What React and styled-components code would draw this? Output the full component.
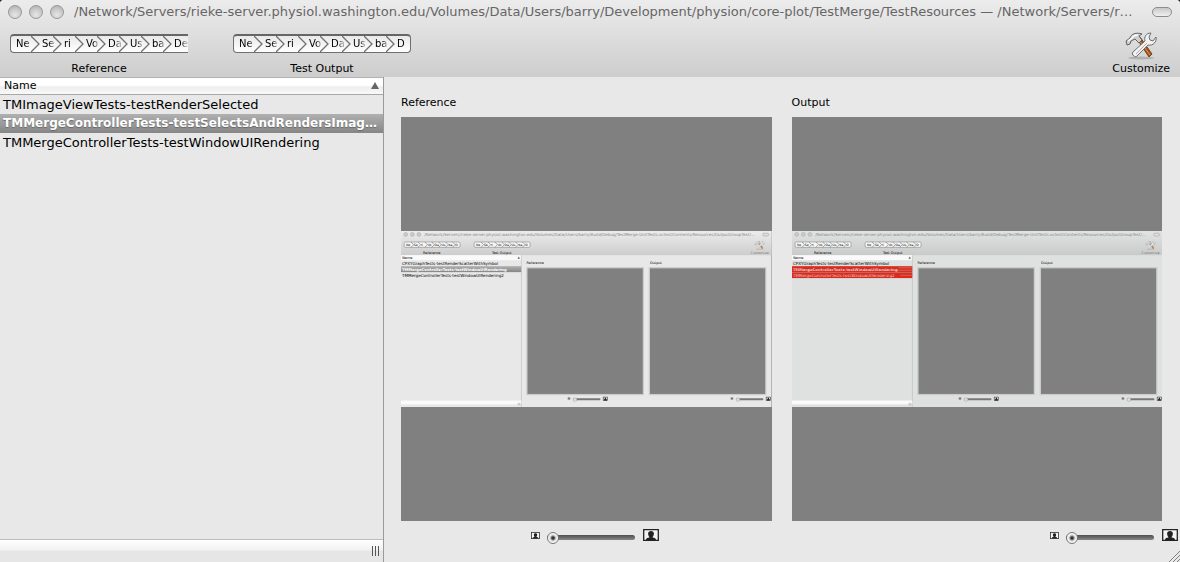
import React from 'react';
import styled, { createGlobalStyle, css } from 'styled-components';

const sans = '"DejaVu Sans", "Liberation Sans", sans-serif';

const GlobalStyle = createGlobalStyle`
  * { box-sizing: border-box; }
  html { background: #222; }
  body { margin: 0; font-family: ${sans}; color: #000; }
  button, input { font: inherit; margin: 0; padding: 0; }
`;

const Window = styled.div`
  display: flex;
  flex-direction: column;
  min-height: 100vh;
  background: #e8e8e8;
  border-radius: 4px 4px 0 0;
  overflow: hidden;
`;

const Chrome = styled.header`
  display: flex;
  flex-direction: column;
  height: 77px;
  background: linear-gradient(#ececec, #cdcdcd);
`;

const TitleBar = styled.div`
  display: flex;
  align-items: center;
  height: 23px;
  padding: 0 8px;
`;

const Lights = styled.div`
  display: flex;
  gap: 7px;
  margin-right: 10px;
`;

const Light = styled.button`
  width: 14px;
  height: 14px;
  border: 1px solid #999;
  border-radius: 50%;
  background: radial-gradient(circle at 50% 75%, #e6e6e6, #c9c9c9 55%, #aaa);
`;

const Title = styled.h1`
  flex: 1;
  margin: 0;
  min-width: 0;
  overflow: hidden;
  white-space: nowrap;
  font-size: 13px;
  line-height: 18px;
  font-weight: 400;
  color: #666;
`;

const Pill = styled.button`
  width: 20px;
  height: 10px;
  border: 1px solid #8c8c8c;
  border-radius: 5px;
  background: linear-gradient(#c8c8c8, #f0f0f0);
`;

const Toolbar = styled.div`
  display: flex;
  align-items: flex-start;
  gap: 45px;
  padding: 11px 10px 0;
`;

const ToolItem = styled.div`
  display: flex;
  flex-direction: column;
  align-items: center;
  gap: 8px;
`;

const ToolLabel = styled.span`
  font-size: 11px;
  line-height: 16px;
`;

const CustomizeButton = styled.button`
  display: flex;
  flex-direction: column;
  align-items: center;
  margin-left: auto;
  margin-top: -2px;
  border: 0;
  background: none;
  svg { display: block; }
`;

const PathBar = styled.nav`
  display: flex;
  width: 178px;
  height: 19px;
  border: 1px solid #6f6f6f;
  border-top: 2px solid #666;
  border-radius: ${p => (p.$cut ? '4px 0 0 4px' : '4px')};
  ${p => p.$cut && css`border-right: 0;`}
  background: linear-gradient(#e9e9e9, #fff);
`;

const Segment = styled.button`
  display: flex;
  flex: none;
  width: ${p => (p.$first ? 29 : p.$last ? 16 : 22)}px;
  padding-left: ${p => (p.$first ? 5 : 2)}px;
  border: 0;
  background: none;
  text-align: left;
  svg { flex: none; display: block; margin-left: -3px; }
`;

const SegmentText = styled.span`
  flex: 1;
  white-space: nowrap;
  font-size: 10px;
  line-height: 15px;
  color: transparent;
  background: linear-gradient(90deg, #000 50%, #aaa 85%);
  background-clip: text;
`;

const Body = styled.div`
  display: flex;
  flex: 1;
`;

const Sidebar = styled.aside`
  display: flex;
  flex-direction: column;
  flex: none;
  width: 384px;
  border-right: 1px solid #9a9a9a;
`;

const TestTable = styled.table`
  width: 100%;
  table-layout: fixed;
  border-collapse: collapse;
`;

const HeadCell = styled.th`
  height: 17px;
  padding: 0 4px 1px;
  border-top: 1px solid #b4b4b4;
  border-bottom: 1px solid #a8a8a8;
  background: linear-gradient(#fff 45%, #ececec 50%, #fafafa);
  font-weight: 400;
`;

const HeadContent = styled.div`
  display: flex;
  align-items: center;
  justify-content: space-between;
  font-size: 11px;
  line-height: 14px;
`;

const Row = styled.tr`
  font-size: 13px;
  ${p => p.$selected && css`
    background: linear-gradient(#b0b0b0, #868686);
    color: #fff;
    font-size: 12px;
    font-weight: 700;
    text-shadow: 0 1px 1px #666;
  `}
`;

const Cell = styled.td`
  height: 19px;
  padding: 0 3px;
  white-space: nowrap;
  line-height: 19px;
`;

const SidebarFoot = styled.div`
  display: flex;
  justify-content: flex-end;
  align-items: center;
  height: 23px;
  margin-top: auto;
  padding-right: 3px;
  border-top: 1px solid #bcbcbc;
  background: linear-gradient(#fff, #f2f2f2 45%, #e6e6e6 50%);
`;

const Grip = styled.div`
  width: 8px;
  height: 10px;
  background: repeating-linear-gradient(90deg, #555 0 1px, transparent 1px 3px);
`;

const Main = styled.main`
  display: flex;
  flex-direction: column;
  flex: 1;
  min-width: 0;
`;

const Views = styled.div`
  display: grid;
  grid-template-columns: 1fr 1fr;
  flex: 1;
  gap: 20px;
  padding: 18px 18px 0 17px;
`;

const View = styled.section`
  display: flex;
  flex-direction: column;
  min-width: 0;
`;

const ViewTitle = styled.h2`
  margin: 0 0 6px;
  font-size: 11px;
  line-height: 16px;
  font-weight: 400;
`;

const ImageWell = styled.div`
  display: flex;
  align-items: center;
  flex: 1;
  background: #808080;
  svg { display: block; width: 100%; height: auto; }
`;

const Zooms = styled.footer`
  display: grid;
  grid-template-columns: 1fr 1fr;
  height: 41px;
  padding-top: 5px;
`;

const Zoom = styled.label`
  display: flex;
  align-items: center;
  align-self: start;
  justify-content: ${p => (p.$end ? 'flex-end' : 'center')};
  padding: ${p => (p.$end ? '0 2px 0 0' : '0 0 0 24px')};
  height: 18px;
`;

const Range = styled.input`
  appearance: none;
  width: 88px;
  height: 14px;
  margin: 4px 8px 0 7px;
  background: none;
  &::-webkit-slider-runnable-track {
    height: 5px;
    border-radius: 3px;
    background: linear-gradient(#4e4e4e, #888);
  }
  &::-webkit-slider-thumb {
    appearance: none;
    width: 12px;
    height: 12px;
    margin-top: -3px;
    border: 1px solid #777;
    border-radius: 50%;
    background: radial-gradient(circle, #333 0 1px, #ddd 3px, #fff 5px);
  }
`;

const ResizeCorner = styled.svg`
  position: absolute;
  right: 0;
  bottom: 0;
`;

const Frame = styled.div`
  position: relative;
`;

const names = ['Ne', 'Se', 'ri', 'Vo', 'Da', 'Us', 'ba'];

function Chevron() {
  return (
    <svg width="9" height="16" viewBox="0 0 9 16" fill="none">
      <path d="M0 0 8 8 0 16" stroke="#707070" strokeWidth="1.3" />
    </svg>
  );
}

function PathControl({ label, last, cut }) {
  return (
    <ToolItem>
      <PathBar $cut={cut} aria-label={label}>
        {names.map((n, i) => (
          <Segment key={n} $first={i === 0}>
            <SegmentText>{n}</SegmentText>
            <Chevron />
          </Segment>
        ))}
        <Segment $last><SegmentText>{last}</SegmentText></Segment>
      </PathBar>
      <ToolLabel>{label}</ToolLabel>
    </ToolItem>
  );
}

function ToolsArt() {
  return (
    <>
      <ellipse cx="17" cy="26" rx="13" ry="1.5" fill="#999" opacity=".6" />
      <path d="m13 7 3-2 12 17-3 3z" fill="#a8551a" stroke="#5c2c0c" strokeWidth=".8" />
      <path d="m15 8 11 15" stroke="#dc9a55" strokeWidth="1" />
      <path d="M3 13 2 9l4-3c1-4 6-6 12-4l-3 2 3 4-3 3-4-4-4 2-1 3z" fill="#cfcfcf" stroke="#555" strokeWidth=".9" />
      <path d="m4 9 4-3c1-2 3-3 6-3" stroke="#fff" strokeWidth="1.5" fill="none" />
      <path d="M10 24c-2-1-2-3-1-4L21 9c-1-4 1-8 6-8l-2 4 1 3 3 1 3-4c1 5-3 9-8 8L13 24c-1 1-2 1-3 0z" fill="#f2f2f2" stroke="#606060" strokeWidth=".9" />
      <path d="m12 22 11-11" stroke="#aaa" strokeWidth="1" />
    </>
  );
}

function Portrait({ width, height }) {
  return (
    <svg width={width} height={height} viewBox="0 0 16 12" preserveAspectRatio="none">
      <rect x=".7" y=".6" width="14.6" height="10.8" fill="#f4f4f4" stroke="#222" strokeWidth="1.3" />
      <path d="M3 11c0-2 2-2 3.600-2.700C5.700 7.500 5.100 6 5.100 4.600 5.100 2.900 6.300 2 8 2s2.900.9 2.900 2.600c0 1.400-.6 2.900-1.500 3.700C11 9 13 9 13 11z" fill="#222" />
    </svg>
  );
}

function ZoomControl({ label, end }) {
  return (
    <Zoom $end={end}>
      <Portrait width={9} height={7} />
      <Range type="range" min="0" max="100" defaultValue="0" aria-label={label} />
      <Portrait width={16} height={12} />
    </Zoom>
  );
}

function ShotPath({ x }) {
  return (
    <g>
      <rect x={x} y="35" width="178" height="17" rx="4" fill="#f6f6f6" stroke="#888" strokeWidth="2" />
      {[...names, 'D'].map((n, i) => (
        <g key={n}>
          <text x={x + 6 + i * 22 + (i ? 3 : 0)} y="48" fontSize="10">{n}</text>
          {i < 7 && <path d={`M${x + 22 + i * 22} 35l8 8.500-8 8.500`} fill="none" stroke="#777" strokeWidth="2" />}
        </g>
      ))}
    </g>
  );
}

function ShotSlider({ x }) {
  return (
    <g>
      <rect x={x} y="530" width="8" height="7" fill="#777" />
      <rect x={x + 17} y="533" width="87" height="6" rx="2" fill="#777" />
      <circle cx={x + 23} cy="537" r="6" fill="#ddd" stroke="#888" />
      <rect x={x + 113} y="529" width="14" height="11" fill="#ddd" stroke="#444" strokeWidth="2" />
      <path d={`M${x + 115} 540v-3l3-2v-4h4v4l3 2v3z`} fill="#222" />
    </g>
  );
}

function Screenshot({ id, diff }) {
  const bg = diff ? '#dfe1e0' : '#e8e8e8';
  return (
    <svg viewBox="0 0 1180 562" fontFamily={sans} role="img" aria-label={`${id} image`}>
      <defs>
        <linearGradient id={`${id}-bar`} x2="0" y2="1">
          <stop stopColor={diff ? '#e2e4e3' : '#ececec'} />
          <stop offset="1" stopColor={diff ? '#c9cbca' : '#cdcdcd'} />
        </linearGradient>
        <linearGradient id={`${id}-row`} x2="0" y2="1">
          <stop stopColor="#b0b0b0" />
          <stop offset="1" stopColor="#868686" />
        </linearGradient>
      </defs>
      <rect width="1180" height="562" fill={bg} />
      <rect width="1180" height="77" fill={`url(#${id}-bar)`} />
      {[15, 36, 57].map(cx => <circle key={cx} cx={cx} cy="11" r="6" fill="#ccc" stroke="#aaa" strokeWidth="2" />)}
      <text x="74" y="16" fontSize="13" fill="#888">/Network/Servers/rieke-server.physiol.washington.edu/Volumes/Data/Users/barry/Build/Debug/TestMerge-UnitTests.octest/Contents/Resources/OutputGroupTest/…</text>
      <rect x="1152" y="7" width="19" height="9" rx="4" fill="#ddd" stroke="#aaa" strokeWidth="2" />
      <ShotPath x={10} />
      <ShotPath x={233} />
      <g fontSize="11">
        <text x="98" y="72" textAnchor="middle">Reference</text>
        <text x="321" y="72" textAnchor="middle">Test Output</text>
        <text x="1142" y="72" textAnchor="middle" fill="#777">Customize</text>
      </g>
      <g transform="translate(1125 32)" opacity=".7" fill="none"><ToolsArt /></g>
      <rect y="77" width="383" height="16" fill="#fafafa" />
      <text x="4" y="89" fontSize="11">Name</text>
      <path d="m371 88 4-7 4 7z" fill="#666" />
      <path d="M383.500 77v485" stroke="#bbb" strokeWidth="2" />
      <g fontSize="13">
        <text x="3" y="109">CPXYGraphTests-testRenderScatterWithSymbol</text>
        <rect y="112" width="383" height={diff ? 38 : 19} fill={diff ? '#dc2a1c' : `url(#${id}-row)`} />
        <text x="3" y="127" fontSize="12" fontWeight="700" fill={diff ? '#dadada' : '#fff'}>TMMergeControllerTests-testWindowUIRendering</text>
        <text x="3" y="146" fill={diff ? '#dadada' : '#000'}>TMMergeControllerTests-testWindowUIRendering2</text>
        {diff && <path d="M0 121h383M0 140h383" stroke="#dc2a1c" strokeWidth="2" strokeDasharray="9 5" />}
        {diff && <path d="M340 117h43M335 125h48M345 141h38M0 132h383" stroke="#c08a84" strokeWidth="2" />}
      </g>
      <rect y="540" width="383" height="12" fill="#fbfbfb" />
      <path d="M373 547v8m3-8v8m3-8v8" stroke="#777" />
      <text x="400" y="106" fontSize="11">Reference</text>
      <text x="793" y="106" fontSize="11">Output</text>
      <rect x="401" y="117" width="371" height="404" fill="#808080" stroke="#ccc" strokeWidth="4" />
      <rect x="791" y="117" width="371" height="404" fill="#808080" stroke="#ccc" strokeWidth="4" />
      <ShotSlider x={531} />
      <ShotSlider x={1050} />
    </svg>
  );
}

const tests = [
  'TMImageViewTests-testRenderSelected',
  'TMMergeControllerTests-testSelectsAndRendersImag…',
  'TMMergeControllerTests-testWindowUIRendering',
];

export default function App() {
  return (
    <Frame>
      <GlobalStyle />
      <Window>
        <Chrome>
          <TitleBar>
            <Lights>
              <Light aria-label="Close" />
              <Light aria-label="Minimize" />
              <Light aria-label="Zoom" />
            </Lights>
            <Title>/Network/Servers/rieke-server.physiol.washington.edu/Volumes/Data/Users/barry/Development/physion/core-plot/TestMerge/TestResources — /Network/Servers/r…</Title>
            <Pill aria-label="Toggle toolbar" />
          </TitleBar>
          <Toolbar>
            <PathControl label="Reference" last="De" cut />
            <PathControl label="Test Output" last="D" />
            <CustomizeButton>
              <svg width="34" height="29" viewBox="0 0 34 29" fill="none"><ToolsArt /></svg>
              <ToolLabel>Customize</ToolLabel>
            </CustomizeButton>
          </Toolbar>
        </Chrome>
        <Body>
          <Sidebar>
            <TestTable>
              <thead>
                <tr>
                  <HeadCell>
                    <HeadContent>
                      Name
                      <svg width="8" height="7" viewBox="0 0 8 7"><path d="m0 7 4-7 4 7z" fill="#666" /></svg>
                    </HeadContent>
                  </HeadCell>
                </tr>
              </thead>
              <tbody>
                {tests.map((t, i) => (
                  <Row key={t} $selected={i === 1}><Cell>{t}</Cell></Row>
                ))}
              </tbody>
            </TestTable>
            <SidebarFoot><Grip /></SidebarFoot>
          </Sidebar>
          <Main>
            <Views>
              <View>
                <ViewTitle>Reference</ViewTitle>
                <ImageWell><Screenshot id="reference" /></ImageWell>
              </View>
              <View>
                <ViewTitle>Output</ViewTitle>
                <ImageWell><Screenshot id="output" diff /></ImageWell>
              </View>
            </Views>
            <Zooms>
              <ZoomControl label="Reference zoom" />
              <ZoomControl label="Output zoom" end />
            </Zooms>
          </Main>
        </Body>
      </Window>
      <ResizeCorner width="12" height="12" viewBox="0 0 12 12">
        <path d="M1 12 12 1M5 12l7-7M9 12l3-3" stroke="#808080" />
      </ResizeCorner>
    </Frame>
  );
}
